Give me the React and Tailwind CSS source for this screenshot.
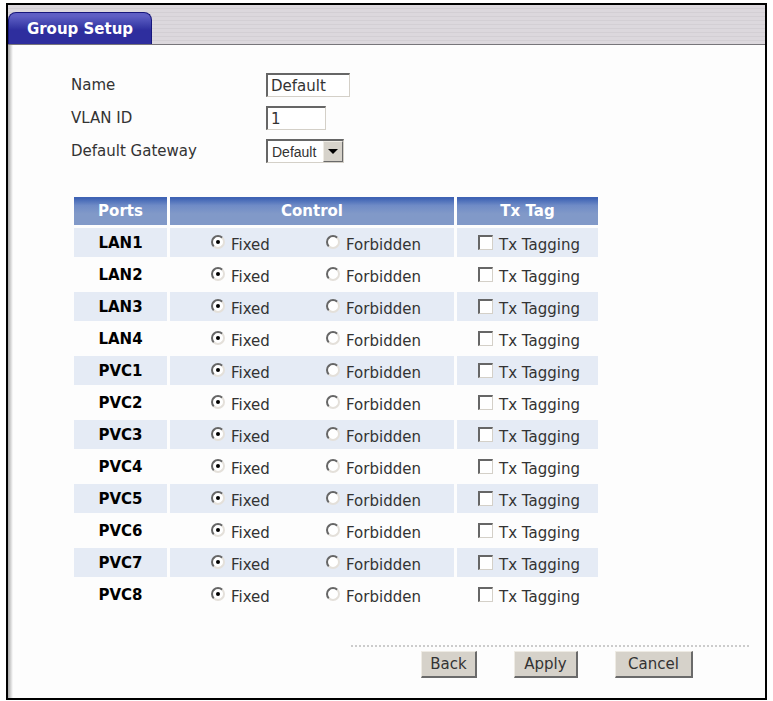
/**
 * App.jsx
 *
 * VLAN group setup page: group fields, port table and action buttons.
 */

const PORTS = [
  'LAN1', 'LAN2', 'LAN3', 'LAN4',
  'PVC1', 'PVC2', 'PVC3', 'PVC4', 'PVC5', 'PVC6', 'PVC7', 'PVC8',
];

const SUNKEN = 'border-t-2 border-l-2 border-b border-r border-t-[#666] border-l-[#666] border-b-[#d4d0c8] border-r-[#d4d0c8] bg-white';

const HEAD_CELL =
  'h-7 p-0 text-center font-bold text-white bg-linear-to-b from-[#3f63b4] from-5% via-[#6f8bc6] via-30% to-[#8199c8] to-60%';

function FormRow({ id, label, children }) {
  return (
    <div className="flex h-6 items-center">
      <label htmlFor={id} className="w-[195px]">{label}</label>
      {children}
    </div>
  );
}

function Radio({ name, label, defaultChecked }) {
  return (
    <label className="flex items-start gap-1.5">
      <span className="relative mt-[7px] size-3.5">
        <input
          type="radio"
          name={name}
          defaultChecked={defaultChecked}
          className="peer block size-3.5 appearance-none rounded-full border-2 border-t-[#666] border-l-[#666] border-r-[#e4e0da] border-b-[#e4e0da] bg-white"
        />
        <span className="pointer-events-none absolute inset-[5px] hidden rounded-full bg-black peer-checked:block" />
      </span>
      <span className="pt-[7px] leading-5">{label}</span>
    </label>
  );
}

function PortRow({ port, shaded }) {
  const bg = shaded ? 'bg-[#e5ebf5]' : 'bg-[#fdfdfd]';
  return (
    <tr>
      <th scope="row" className={`h-[29px] p-0 text-center align-middle font-bold text-black ${bg}`}>
        {port}
      </th>
      <td className={`p-0 align-top ${bg}`}>
        <div className="flex h-[29px] pl-[41px]">
          <div className="w-[115px]">
            <Radio name={port} label="Fixed" defaultChecked />
          </div>
          <Radio name={port} label="Forbidden" />
        </div>
      </td>
      <td className={`p-0 align-top ${bg}`}>
        <label className="flex h-[29px] items-start gap-1.5 pl-[21px]">
          <input
            type="checkbox"
            className={`mt-[7px] size-[15px] appearance-none checked:bg-black ${SUNKEN}`}
          />
          <span className="pt-[7px] leading-5">Tx Tagging</span>
        </label>
      </td>
    </tr>
  );
}

function ActionButton({ children, className }) {
  return (
    <button
      type="button"
      className={`h-[27px] border-t border-l border-r-2 border-b-2 border-t-[#eeebe4] border-l-[#eeebe4] border-r-[#6a6a6a] border-b-[#6a6a6a] bg-[#d6d2ca] leading-5 ${className}`}
    >
      {children}
    </button>
  );
}

function App() {
  return (
    <div className="mx-1.5 mt-[3px] border-2 border-black bg-[#fdfdfd] font-['DejaVu_Sans',Verdana,sans-serif] text-[15px] leading-5 text-[#333]">
      <header className="flex h-10 items-end border-b border-[#77757a] bg-[repeating-linear-gradient(to_bottom,#dcd8dd_0px,#dcd8dd_3px,#d3cfd4_3px,#d3cfd4_4px)]">
        <h1 className="flex h-8 w-36 items-center justify-center rounded-t-lg border border-b-0 border-[#17177c] bg-linear-to-b from-[#5f5fc4] from-10% to-[#2e2e9e] to-55% font-bold text-white">
          Group Setup
        </h1>
      </header>

      <main className="bg-linear-to-r from-[#a8a8a8] to-[#fdfdfd] to-[5px] pb-5">
        <form>
          <div className="flex flex-col gap-[9px] pt-7 pl-[63px]">
            <FormRow id="name" label="Name">
              <input id="name" type="text" defaultValue="Default" className={`h-6 w-[84px] px-[3px] ${SUNKEN}`} />
            </FormRow>
            <FormRow id="vlan" label="VLAN ID">
              <input id="vlan" type="text" defaultValue="1" className={`h-6 w-[60px] px-[3px] ${SUNKEN}`} />
            </FormRow>
            <FormRow id="gateway" label="Default Gateway">
              <div className="relative">
                <select
                  id="gateway"
                  className={`block h-6 w-[78px] appearance-none pl-1 font-['Liberation_Sans',Arial,sans-serif] text-sm ${SUNKEN}`}
                >
                  <option>Default</option>
                </select>
                <span className="pointer-events-none absolute top-0.5 right-px flex h-[21px] w-5 items-center justify-center border border-t-[#eeebe4] border-l-[#eeebe4] border-r-[#6a6a6a] border-b-[#6a6a6a] bg-[#d6d2ca]">
                  <svg viewBox="0 0 10 5" className="h-[5px] w-2.5" aria-hidden="true">
                    <path d="M0 0h10L5 5z" fill="#000" />
                  </svg>
                </span>
              </div>
            </FormRow>
          </div>

          <div className="pt-[31px] pl-[63px]">
            <table className="w-[530px] table-fixed border-separate border-spacing-[3px]">
              <colgroup>
                <col className="w-[93px]" />
                <col className="w-[284px]" />
                <col />
              </colgroup>
              <thead>
                <tr>
                  <th scope="col" className={HEAD_CELL}>Ports</th>
                  <th scope="col" className={HEAD_CELL}>Control</th>
                  <th scope="col" className={HEAD_CELL}>Tx Tag</th>
                </tr>
              </thead>
              <tbody>
                {PORTS.map((port, i) => (
                  <PortRow key={port} port={port} shaded={i % 2 === 0} />
                ))}
              </tbody>
            </table>
          </div>

          <div className="mt-[33px] mr-4 ml-auto flex w-[398px] gap-[37px] border-t-2 border-dotted border-[#ccc] pt-1 pl-[70px]">
            <ActionButton className="w-14">Back</ActionButton>
            <ActionButton className="w-16">Apply</ActionButton>
            <ActionButton className="w-[78px]">Cancel</ActionButton>
          </div>
        </form>
      </main>
    </div>
  );
}

export default App;
